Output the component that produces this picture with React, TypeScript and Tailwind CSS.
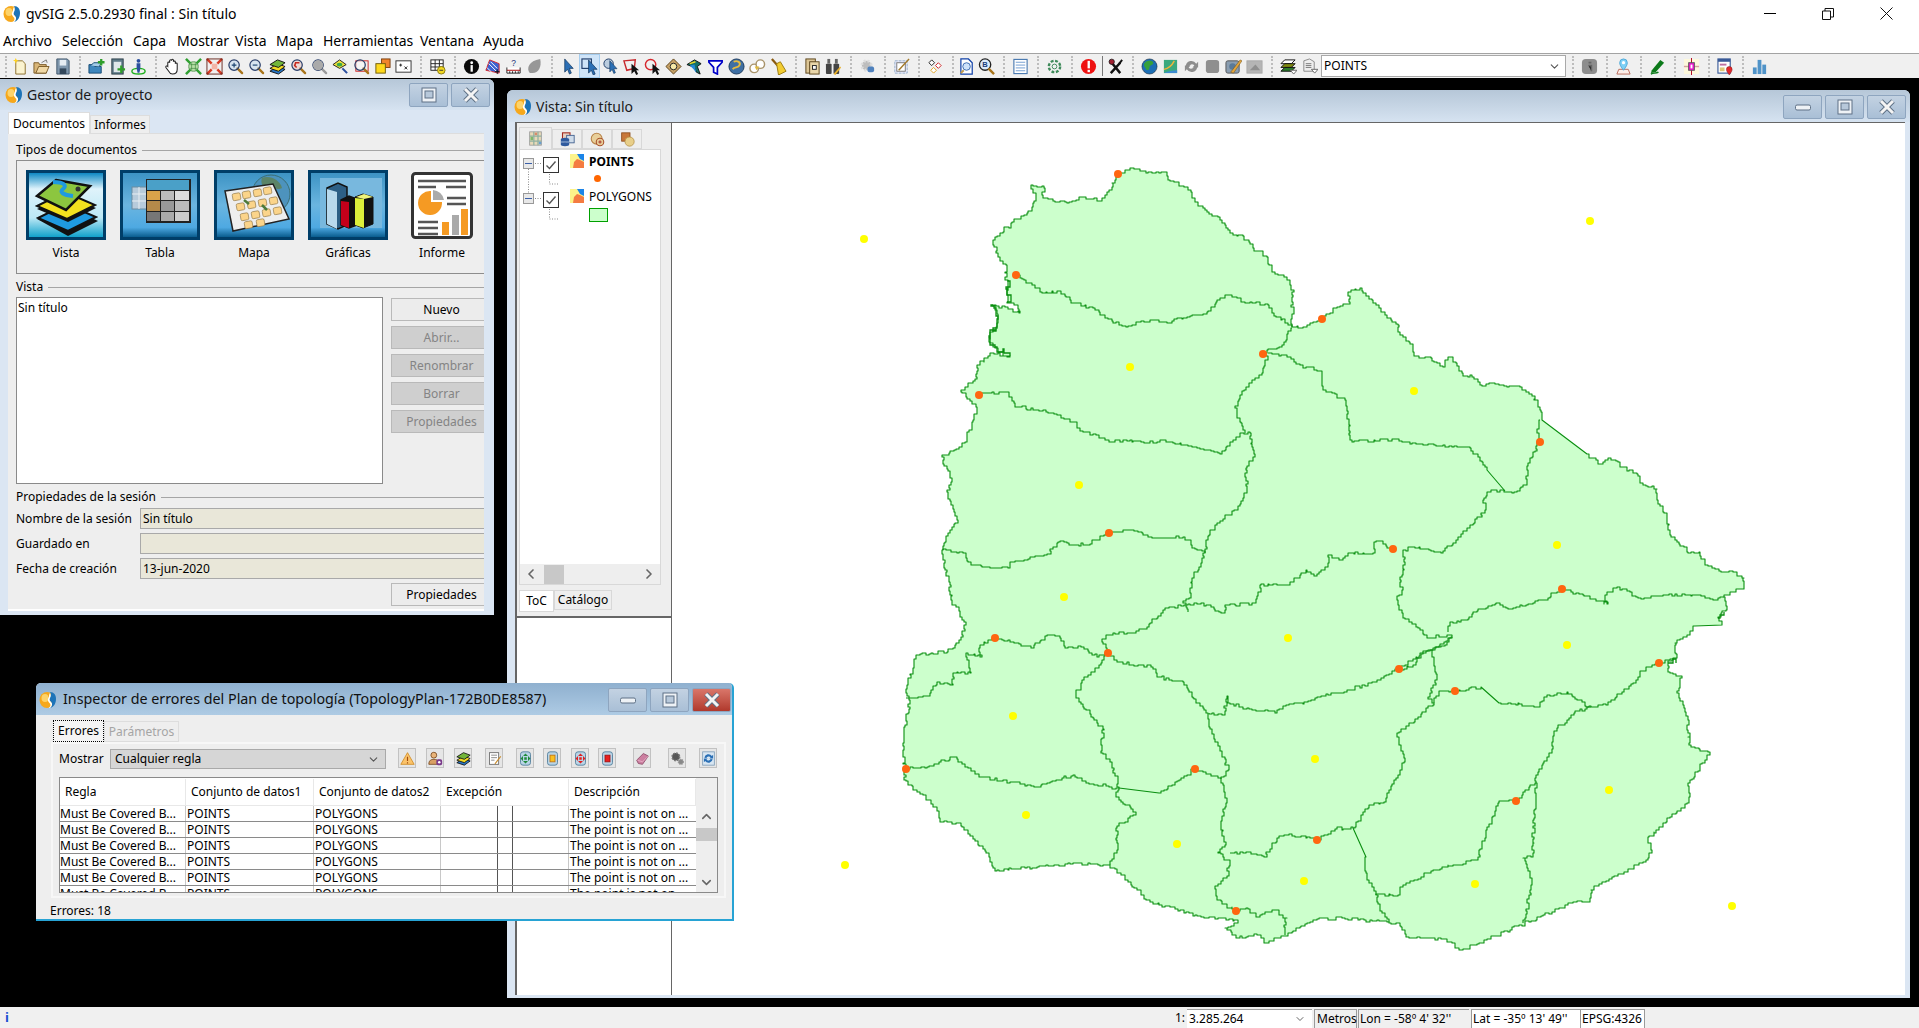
import React from "react";
import { ChevronDown, ChevronLeft, ChevronRight, ChevronUp } from "lucide-react";

type P = number[];
const outer: P[] = [[1118,174],[1130,168],[1148,172],[1165,172],[1168,180],[1187,187],[1195,202],[1207,212],[1220,220],[1230,233],[1247,240],[1253,248],[1267,257],[1272,272],[1287,280],[1294,292],[1292,317],[1292,327],[1303,327],[1322,319],[1337,307],[1350,302],[1348,292],[1360,288],[1373,303],[1385,315],[1398,325],[1400,335],[1413,347],[1414,356],[1427,357],[1443,367],[1448,357],[1453,358],[1463,376],[1470,375],[1480,385],[1493,383],[1507,387],[1520,387],[1532,396],[1540,410],[1542,420,0],[1587,454],[1598,464],[1608,458],[1618,462],[1620,467],[1637,474],[1640,483],[1657,489],[1657,500],[1667,517],[1670,535],[1688,553],[1699,552],[1705,565],[1725,572],[1733,572],[1744,578],[1744,589],[1733,592],[1724,597],[1727,610],[1718,618],[1722,625,0],[1695,626],[1690,635],[1675,643],[1677,658],[1668,663],[1668,672],[1682,678],[1677,693],[1688,720],[1689,745],[1710,755],[1690,783],[1689,803],[1648,840],[1652,853],[1648,860],[1591,890],[1590,902],[1575,902],[1512,930],[1463,950],[1447,939],[1410,938],[1400,923],[1389,922],[1345,918],[1319,919],[1285,936],[1267,943],[1261,935],[1240,938],[1225,928],[1238,920],[1204,917],[1151,902],[1115,868],[1110,865],[1073,864],[997,871],[989,853],[961,823],[940,821],[937,807],[906,780],[903,743],[910,700],[906,689],[916,655],[947,652],[961,637],[966,622],[952,600],[947,570],[942,550],[948,533],[958,520],[947,490],[952,478],[942,455],[962,447],[973,420],[977,407],[961,390],[977,377],[977,365],[990,353],[1010,356],[995,347],[990,342],[990,332],[997,323],[997,310],[993,305],[1020,313],[1018,305],[1007,302],[1008,280],[1005,277],[1007,265],[1000,257],[993,240],[1012,222],[1032,210],[1036,193],[1031,185],[1044,188],[1043,198],[1053,201],[1067,203],[1083,197],[1100,201],[1107,192]];
const rivers: P[][] = [
[[1016,275],[1042,293],[1057,291],[1075,303],[1093,308],[1105,318],[1122,326],[1150,320],[1167,323],[1190,316],[1207,312],[1220,298],[1228,295],[1243,302],[1268,305],[1272,313],[1292,327]],
[[1292,328],[1282,347],[1263,354],[1268,360],[1263,373],[1252,383],[1242,395],[1235,408],[1240,422],[1245,433]],
[[979,395],[1007,392],[1015,407],[1043,410],[1073,422],[1083,432],[1107,440],[1147,443],[1160,440],[1173,443],[1197,448],[1220,454],[1230,442],[1240,433],[1250,433],[1255,457],[1246,470],[1247,490],[1238,510],[1218,523],[1208,540],[1205,553],[1199,570],[1191,583],[1191,598],[1183,603],[1188,612]],
[[1268,353],[1287,357],[1300,365],[1322,373],[1323,390],[1345,400],[1350,433],[1352,442],[1397,439],[1410,444],[1443,445],[1470,448],[1487,470,0],[1505,491]],
[[1540,420],[1537,433],[1540,442],[1527,470],[1527,485],[1517,492],[1493,490],[1484,500],[1485,513],[1470,528],[1453,545],[1443,553],[1415,547],[1403,553],[1405,565],[1400,580],[1402,595],[1397,600],[1403,618],[1420,630],[1427,638],[1447,635],[1452,637],[1447,645],[1433,650],[1423,653],[1413,667],[1399,669]],
[[1393,549],[1383,541],[1376,542],[1375,553],[1350,553],[1343,560],[1329,555],[1328,567],[1317,576],[1307,570],[1290,585],[1261,585],[1256,603],[1225,607],[1225,613],[1204,603],[1188,605],[1165,610],[1149,627],[1136,633],[1115,633],[1102,642],[1108,653]],
[[1109,533],[1090,545],[1060,542],[1047,555],[1013,562],[1010,568],[990,567],[973,565],[963,552],[943,550]],
[[1109,533],[1127,530],[1138,532],[1148,537],[1183,537],[1195,549],[1205,553]],
[[1562,589],[1550,598],[1513,609],[1500,603],[1477,612],[1468,620],[1450,623],[1448,632]],
[[1562,589],[1608,604],[1605,595],[1617,587],[1638,598],[1663,595],[1697,595],[1713,600],[1724,597]],
[[1432,650],[1426,653],[1399,669],[1384,678],[1353,690],[1335,693],[1308,702],[1287,705],[1277,713],[1256,710],[1230,703],[1227,696],[1225,715],[1209,713]],
[[1108,653],[1117,662],[1151,667],[1157,677],[1183,682],[1193,698],[1206,713],[1209,727],[1222,753],[1229,770],[1221,783],[1227,803],[1221,823],[1225,847],[1218,853],[1230,863],[1227,878],[1215,887],[1217,900],[1236,911]],
[[1108,653],[1099,668],[1084,680],[1076,695],[1091,717],[1104,730],[1101,753],[1114,770],[1119,790],[1116,797],[1136,815],[1117,828],[1117,853],[1110,865]],
[[906,769],[927,767],[953,757],[979,777],[1010,782],[1034,787],[1073,775],[1086,783],[1119,788,0],[1159,793],[1195,769],[1221,779]],
[[906,698],[927,696],[937,682],[953,684],[953,673],[971,673],[966,653],[982,657],[980,645],[995,638],[1031,648],[1047,635],[1060,638],[1065,648],[1078,646],[1097,657],[1108,653]],
[[1230,853],[1246,852],[1264,857],[1277,838],[1287,835],[1317,840],[1335,829],[1353,828,0],[1366,857],[1366,873],[1376,895],[1382,913],[1389,922]],
[[1353,828],[1369,805],[1384,802],[1405,758],[1397,733],[1418,717],[1434,703],[1428,697],[1437,677],[1432,650],[1452,637]],
[[1455,691],[1439,692],[1434,703]],
[[1455,691],[1481,687,0],[1499,703],[1539,707],[1544,697],[1567,692],[1586,707],[1606,705],[1633,683],[1646,667],[1659,663],[1674,658]],
[[1591,707],[1575,713],[1554,733],[1552,753],[1544,763],[1536,778],[1534,820],[1533,857],[1523,858],[1532,883],[1525,920],[1523,923]],
[[1536,783],[1516,801],[1499,803],[1489,827],[1478,860],[1455,865],[1429,873],[1403,887],[1400,895],[1376,895]],
[[1236,911],[1246,908],[1256,917],[1272,910],[1287,918],[1285,935]],
];
const jagged: P[][] = [
[[993,305],[997,323],[990,342],[995,347],[1010,356]],
[[1007,302],[1008,280]],
[[1718,618],[1724,612]],
[[1668,663],[1676,658]],
];
const orange = [[1118,174],[1016,275],[1263,354],[979,395],[1109,533],[1322,319],[1540,442],[1393,549],[1562,589],[1659,663],[1399,669],[1455,691],[995,638],[1108,653],[906,769],[1195,769],[1516,801],[1317,840],[1236,911]];
const yellow = [[1130,367],[1079,485],[864,239],[1590,221],[845,865],[1732,906],[1414,391],[1557,545],[1567,645],[1064,597],[1288,638],[1013,716],[1315,759],[1609,790],[1026,815],[1177,844],[1304,881],[1475,884]];

function rough(pts: P[], seed: number, close = false, amp = 3) {
  let s = seed * 9301 + 17;
  const rnd = () => { s = (s * 1664525 + 1013904223) % 4294967296; return s / 4294967296 - 0.5; };
  const list = close ? [...pts, pts[0]] : pts;
  let d = "";
  let py = 0;
  for (let i = 0; i < list.length - 1; i++) {
    const a = list[i], b = list[i + 1];
    const len = Math.hypot(b[0] - a[0], b[1] - a[1]);
    const straight = a[2] === 0;
    const n = straight ? 1 : Math.max(1, Math.floor(len / 3));
    for (let k = i === 0 ? 0 : 1; k <= n; k++) {
      const t = k / n;
      const edge = k === n || k === 0;
      const jx = edge || straight ? 0 : rnd() * amp;
      const jy = edge || straight ? 0 : rnd() * amp;
      const x = Math.round(a[0] + (b[0] - a[0]) * t + jx);
      const y = Math.round(a[1] + (b[1] - a[1]) * t + jy);
      if (!d) d = `M${x} ${y}`;
      else if (straight) d += `L${x} ${y}`;
      else d += `L${x} ${py}L${x} ${y}`;
      py = y;
    }
  }
  return d + (close ? "Z" : "");
}

function Logo({ s = 18 }: { s?: number }) {
  return (
    <svg width={s} height={s} viewBox="0 0 18 18" className="shrink-0">
      <ellipse cx="8" cy="9" rx="7.5" ry="8" fill="#f6a81c" />
      <ellipse cx="6" cy="7" rx="3.5" ry="4" fill="#fdd36a" />
      <path d="M11 1c4 0 6 3 6 7s-2 8-6 9c2-2 3-4 1-6-1-1-3-2-1-5 1-2 1-3 0-5z" fill="#1d74b8" />
      <path d="M11 2c1 2 1 3 0 5-1 2 0 3 1 4 2 2 1 4-1 6l-1 0c2-2 2-4 0-5.500-2-2-1-4 0-6 0-1 0-2 1-3.500z" fill="#fff" />
    </svg>
  );
}

const mag = (c = "#5a8ad0", h = "#a8741a") => (
  <>
    <path d="M11 11l5 5" stroke={h} strokeWidth="2.4" strokeLinecap="round" />
    <circle cx="7.500" cy="7.500" r="5.500" fill={c} fillOpacity=".35" stroke="#2a3f6a" strokeWidth="1.300" />
  </>
);
const arrow = <path d="M5 1l0 14 3-3 2 5 2-1-2-5 4 0z" fill="#2b6fb5" stroke="#0c2f55" strokeWidth=".7" />;
const grayBox = (x = "#8f8f8f") => <rect x="2" y="2" width="14" height="14" rx="3" fill={x} />;

const I: Record<string, React.ReactNode> = {
  newdoc: <><path d="M4 3h7l3 3v11H4z" fill="#fbf3cf" stroke="#8a6d2a" /><path d="M4 0l1 2 2 .5-2 1L4 6 3 3.500 1 2.500l2-.5z" fill="#ffd21f" /></>,
  open: <><path d="M1 5h5l1 2h7v9H1z" fill="#d9b678" stroke="#7a5a26" /><path d="M3 16l3-7h11l-3 7z" fill="#f1d9a6" stroke="#7a5a26" /><path d="M9 5l5-3 1 3" fill="#e7e7e7" stroke="#777" /></>,
  save: <><path d="M3 1h11l2 2v14H3z" fill="#7f97ad" stroke="#40566b" /><rect x="6" y="2" width="7" height="6" fill="#e5ecf2" /><rect x="6" y="11" width="7" height="6" fill="#33475a" /></>,
  addlayer: <><path d="M1 7h5l1 2h7v7H1z" fill="#3f87bd" stroke="#154a73" /><path d="M3 8l3-3h8l-2 4" fill="#a5cde8" stroke="#154a73" /><path d="M14 1v7M10.500 4.500h7" stroke="#2f9e29" strokeWidth="2.400" /></>,
  addtable: <><rect x="3" y="1" width="12" height="16" fill="#5f7b89" stroke="#2c3f49" /><rect x="5" y="4" width="8" height="11" fill="#dfe7ea" /><path d="M13 8v8M9 12h8" stroke="#2f9e29" strokeWidth="2.400" /></>,
  person: <><ellipse cx="9" cy="14" rx="7" ry="3" fill="none" stroke="#20b020" strokeWidth="1.500" /><circle cx="9" cy="3" r="2" fill="#2b4f9e" /><path d="M7 5.500h4v5l-1 5H8l-1-5z" fill="#2b4f9e" /></>,
  hand: <path d="M4 9V5c0-1 2-1 2 0V3c0-1.500 2-1.500 2 0v-.5c0-1.500 2-1.500 2 0V4c0-1 2-1 2 0v2c0-1 2-1 2 0v6c0 3-2 5-5 5-2 0-3-1-4-3L2 10c-.5-1.500 1-2 2-1z" fill="#fff" stroke="#222" strokeWidth="1.100" />,
  fitgreen: <><path d="M1 1l5 5M17 1l-5 5M1 17l5-5M17 17l-5-5" stroke="#31a032" strokeWidth="2.600" /><path d="M4 7h10v4H4z M7 4h4v10H7z" fill="#b8e0a8" stroke="#2a7a2a" strokeWidth=".6" /></>,
  fitred: <><path d="M1 1l5 5M17 1l-5 5M1 17l5-5M17 17l-5-5" stroke="#d93a24" strokeWidth="2.600" /><rect x="1" y="1" width="16" height="16" fill="none" stroke="#6a2a20" /><rect x="6" y="6" width="6" height="6" fill="#f4b4a6" /></>,
  zin: <>{mag("#a9cff0")}<path d="M5 7.500h5M7.500 5v5" stroke="#18406e" strokeWidth="1.200" /></>,
  zout: <>{mag("#a9cff0")}<path d="M5 7.500h5" stroke="#18406e" strokeWidth="1.200" /></>,
  layers: <><path d="M9 9l8 3-7 5-9-3z" fill="#2a78c8" stroke="#111" /><path d="M9 6l8 3-7 5-9-3z" fill="#f3d923" stroke="#111" /><path d="M9 2l8 3-7 5-9-3z" fill="#72b53a" stroke="#111" /></>,
  zback: <>{mag("#e8b3a8")}<path d="M10 5H6L5 8l2 2" fill="none" stroke="#c5281d" strokeWidth="1.700" /></>,
  zgray: <>{mag("#b9b9b9", "#9a9a9a")}<circle cx="7.500" cy="7.500" r="5.500" fill="#aaa" /></>,
  zeye: <><path d="M1 7l7-5 7 5-7 4z" fill="#f4e23a" stroke="#222" /><ellipse cx="8" cy="7" rx="3" ry="2" fill="#3aa84a" /><path d="M11 11l5 5" stroke="#2b4f9e" strokeWidth="2.200" /></>,
  zbox: <><rect x="3" y="3" width="13" height="11" fill="none" stroke="#c22" strokeWidth="1" />{mag("#fff")}</>,
  squares: <><rect x="8" y="1" width="9" height="9" fill="#f0842c" stroke="#7a3f10" /><rect x="2" y="6" width="10" height="10" fill="#ffd91c" stroke="#6f5b0a" /></>,
  xy: <><rect x="1" y="3" width="16" height="12" fill="#fff" stroke="#333" /><path d="M6 6v3M4.500 7.500h3M10 9l3 3m0-3l-3 3" stroke="#222" /></>,
  tablemin: <><rect x="2" y="2" width="13" height="11" fill="#fff" stroke="#222" /><path d="M2 6h13M2 9.500h13M6.500 2v11M11 2v11" stroke="#222" /><circle cx="13" cy="13" r="4" fill="#f3d923" stroke="#8a7a10" /><path d="M11 13h4" stroke="#333" /></>,
  info: <><circle cx="9" cy="9" r="8" fill="#0a0a0a" /><rect x="8" y="7.500" width="2.400" height="7" fill="#fff" /><circle cx="9.200" cy="5" r="1.500" fill="#fff" /></>,
  hatch: <><path d="M2 13L6 2l10 4v10z" fill="#3d62d1" stroke="#d4262a" /><path d="M5 6l8 8M7 4l7 7M3 10l5 5" stroke="#fff" /><path d="M14 12v5M11.500 14.500h5" stroke="#111" /></>,
  ruler: <><path d="M2 10v6h14v-6" fill="#fff" stroke="#222" /><path d="M2 13h14" stroke="#a00" /><path d="M5 16v-2M8 16v-2M11 16v-2M14 16v-2" stroke="#222" /><text x="9" y="8" fontSize="9" textAnchor="middle" fill="#23327a" fontFamily="Liberation Sans">?</text></>,
  leaf: <path d="M4 16C0 11 3 3 15 1c2 8-2 15-8 15-1 0-2 0-3 0z" fill="#979797" />,
  arrow,
  arrowsq: <><rect x="1" y="1" width="10" height="10" fill="none" stroke="#1d3a66" strokeWidth="1.200" /><g transform="translate(3 1)">{arrow}</g></>,
  arrowpoly: <><circle cx="7" cy="6" r="5" fill="#bcd" stroke="#1d3a66" /><g transform="translate(4 2) scale(.85)">{arrow}</g></>,
  redpoly: <><path d="M1 3l12-1-1 9-8 2z" fill="none" stroke="#c7282c" strokeWidth="1.500" /><path d="M9 6v11l3-3 2 4 2-1-2-4h3z" fill="#111" /></>,
  redcirc: <><circle cx="7" cy="7" r="5.500" fill="none" stroke="#d6262c" strokeWidth="1.500" /><path d="M9 6v11l3-3 2 4 2-1-2-4h3z" fill="#111" /></>,
  diamond: <><path d="M9 1l8 8-8 8-8-8z" fill="#c6a166" stroke="#5a3f15" /><circle cx="9" cy="9" r="3.500" fill="#f7e9a8" stroke="#222" /></>,
  colorarrow: <><path d="M1 7l8-5 7 4-4 3 3 8-4-2-2-5z" fill="#136f6a" stroke="#111" /><path d="M4 8l5-1 2 9-3-4z" fill="#2589d6" /><path d="M4 6l6-2" stroke="#f3d923" strokeWidth="1.500" /></>,
  funnel: <path d="M2 3h14v1.500L11 10v7l-4-2v-5L2 4.500z" fill="#fff" stroke="#0000c8" strokeWidth="1.800" />,
  globe: <><circle cx="9" cy="9" r="8" fill="#3e6fa3" stroke="#1d3a5c" /><path d="M6 4c4-2 8 1 6 4-2 3-5 1-7 4" stroke="#e6bb3e" strokeWidth="2" fill="none" /></>,
  sync: <><circle cx="5.500" cy="11" r="4.500" fill="#fff" stroke="#a8936a" strokeWidth="1.500" /><circle cx="12" cy="6.500" r="4.500" fill="#fff" stroke="#a8936a" strokeWidth="1.500" /><path d="M6 9l5 0-3 4" fill="#e0b93a" /></>,
  broom: <><path d="M2 1l6 7" stroke="#8a5a10" strokeWidth="2.400" /><path d="M7 6l4-2 6 10-8 4z" fill="#f2cc31" stroke="#9a7a10" /></>,
  docs: <><rect x="2" y="1" width="10" height="15" fill="#dcc595" stroke="#5a431a" /><rect x="6" y="4" width="10" height="13" fill="#e8d5a8" stroke="#5a431a" /><rect x="9" y="8" width="4" height="4" fill="#fff" stroke="#222" /></>,
  binoc: <><rect x="1" y="6" width="6" height="11" rx="1" fill="#444" /><rect x="9" y="6" width="6" height="11" rx="1" fill="#444" /><rect x="2.500" y="1" width="3" height="5" fill="#666" /><rect x="10.500" y="1" width="3" height="5" fill="#666" /><path d="M9 17l7-8 1 1-6 8z" fill="#e8b02a" /></>,
  gearblue: <><circle cx="8" cy="8" r="5" fill="#bdbdbd" stroke="#ddd" strokeWidth="3" strokeDasharray="2 2" /><rect x="9" y="9" width="7" height="6" rx="2" fill="#4f81bd" /></>,
  boxpen: <><rect x="2" y="3" width="13" height="13" fill="#eef" stroke="#8faac8" strokeDasharray="3 1" /><rect x="4" y="5" width="9" height="9" fill="#fff" stroke="#777" /><path d="M6 13L17 1" stroke="#a37a2c" strokeWidth="1.500" /></>,
  dia3: <><path d="M5 2l3 3-3 3-3-3z" fill="#fff" stroke="#222" /><path d="M12 5l3 3-3 3-3-3z" fill="#fff" stroke="#c22" /><path d="M7 10l3 3-3 3-3-3z" fill="#fff" stroke="#e0a020" /></>,
  docmag: <><path d="M2 1h8l4 4v12H2z" fill="#fff" stroke="#1242a8" strokeWidth="1.300" /><circle cx="8" cy="9" r="4" fill="#cfe3fa" stroke="#3a6ab0" /><path d="M5 13l-3 3" stroke="#c09a4a" strokeWidth="2" /></>,
  bmag: <><circle cx="7.500" cy="7" r="6" fill="#dcebfa" stroke="#222" strokeWidth="1.400" /><text x="7.500" y="10" fontSize="8" fontWeight="700" textAnchor="middle" fill="#1a3f7a" fontFamily="Liberation Sans">B</text><path d="M11 11l6 6" stroke="#a8741a" strokeWidth="2.500" /></>,
  list: <><rect x="2" y="1.500" width="14" height="15" fill="#fff" stroke="#4a79b0" strokeWidth="1.200" /><path d="M4 4.500h10M4 7.500h10M4 10.500h10M4 13.500h10" stroke="#6f9bd0" /></>,
  gearg: <><circle cx="9" cy="9" r="6" fill="none" stroke="#3e8a5a" strokeWidth="2.500" strokeDasharray="3 1.700" /><circle cx="9" cy="9" r="2.500" fill="none" stroke="#3e8a5a" /></>,
  exc: <><circle cx="9" cy="9" r="8" fill="#ee1111" /><rect x="8" y="3" width="2.500" height="8" fill="#fff" /><rect x="8" y="12.500" width="2.500" height="2.500" fill="#fff" /></>,
  tools: <><path d="M4 16L14 5M5 5l9 11" stroke="#111" strokeWidth="2.600" /><path d="M13 6l3-4" stroke="#111" strokeWidth="2" /><circle cx="5" cy="4" r="2.800" fill="#a02030" stroke="#111" strokeWidth=".8" /></>,
  earth: <><circle cx="9" cy="9" r="8" fill="#1d6fb5" stroke="#123" strokeWidth=".6" /><path d="M4 5c3-3 8-3 9 0 0 3-4 2-4 5 0 3-3 4-4 1-1-2-3-3-1-6z" fill="#37a03a" /></>,
  map: <><rect x="2" y="2" width="14" height="14" fill="#3aa97e" /><path d="M2 12c5-1 8-3 11-9" stroke="#f0b53a" strokeWidth="1.500" fill="none" /><path d="M2 16h14v-3c-5 0-9 1-14 3z" fill="#3d8ad0" /></>,
  graysync: <><path d="M3 8a6 6 0 0 1 11-2l2-2v6h-6l2-2a3.500 3.500 0 0 0-6 1z M15 10a6 6 0 0 1-11 2l-2 2V8h6l-2 2a3.500 3.500 0 0 0 6-1z" fill="#8d8d8d" /></>,
  graybox: grayBox(),
  photo: <><rect x="1" y="3" width="14" height="13" rx="2" fill="#8a9db0" stroke="#555" /><circle cx="8" cy="9" r="3.500" fill="#5a7a98" /><path d="M6 15L16 2l2 1L9 16z" fill="#e3a43a" stroke="#6a4a10" strokeWidth=".5" /></>,
  grayrect: <><rect x="1" y="3" width="16" height="13" fill="#b5b5b5" stroke="#aaa" /><path d="M4 13l6-6 5 6z" fill="#8f8f8f" /></>,
  stack2: <><path d="M1 6l4-4h11l-4 4z" fill="#fff" stroke="#111" /><path d="M1 10l4-4h11l-4 4z" fill="#7f8a10" stroke="#111" /><path d="M1 14l4-4h11l-4 4z" fill="#2a7a2a" stroke="#111" /><path d="M11 13h7l-3.500 4z" fill="#fff" stroke="#666" /></>,
  docgray: <><path d="M3 3l6-2 5 3v10H3z" fill="#eee" stroke="#888" /><path d="M5 6h6M5 8h6M5 10h6" stroke="#777" /><path d="M11 12h7l-3.500 4z" fill="#fff" stroke="#666" /></>,
  grayi: <><rect x="1" y="1" width="16" height="16" rx="4" fill="#8d8d8d" /><path d="M8 5h3M8 8h3v6" stroke="#666" strokeWidth="1.800" /></>,
  pin: <><path d="M2 17l2-5h10l2 5z" fill="#fdeee8" stroke="#b86a5a" /><path d="M9 13C6 9 5 7 5 5a4 4 0 0 1 8 0c0 2-1 4-4 8z" fill="#7fd0f5" stroke="#4ea8d8" /><circle cx="9" cy="5" r="1.700" fill="#fff" /></>,
  pen: <><path d="M3 13L12 2l4 3-9 10-5 1z" fill="#0c7a1a" /><path d="M2 17c3-2 5 0 8-2" stroke="#0c7a1a" strokeWidth="1.500" fill="none" /></>,
  pink: <><rect x="1" y="1" width="16" height="16" fill="#fdf8dc" /><path d="M9 0v18" stroke="#b00020" /><path d="M1 9h16" stroke="#d4a0a0" strokeWidth="1.500" /><rect x="6" y="5" width="6" height="8" fill="#f018d0" stroke="#555" /><rect x="8" y="7" width="2" height="4" fill="#fff" /></>,
  formpin: <><rect x="1" y="1" width="13" height="15" fill="#fff" stroke="#3a5a98" strokeWidth="1.200" /><rect x="1" y="1" width="13" height="3" fill="#3a5a98" /><rect x="3" y="6" width="7" height="2" fill="#c070a0" /><rect x="3" y="10" width="5" height="4" fill="#e0c878" /><path d="M13 18c-2-3-3-4-3-6a3 3 0 0 1 6 0c0 2-1 3-3 6z" fill="#e3282c" stroke="#7a1012" strokeWidth=".5" /></>,
  bars: <><rect x="2" y="10" width="4" height="7" fill="#4f93c8" /><rect x="7" y="2" width="4" height="15" fill="#4f93c8" /><rect x="12" y="7" width="4" height="10" fill="#4f93c8" /></>,
  warn: <><path d="M9 2l8 14H1z" fill="#fbc36a" stroke="#d08a20" /><path d="M9 7v5M9 13.500v1.500" stroke="#a04a10" strokeWidth="1.400" /></>,
  userlock: <><circle cx="7" cy="5" r="3.500" fill="#e9b47a" stroke="#7a4a20" /><path d="M1 16c0-5 3-6 6-6s5 1 5 3v3z" fill="#d9a064" stroke="#7a4a20" /><rect x="10" y="10" width="7" height="7" rx="2" fill="#7a3a8a" /><circle cx="13.500" cy="13.500" r="1.500" fill="#fff" /></>,
  notepen: <><rect x="3" y="2" width="11" height="14" fill="#fff" stroke="#666" /><path d="M5 5h7M5 8h7M5 11h4" stroke="#777" /><path d="M9 15l7-9 1 1-7 9z" fill="#c88a2a" /></>,
  frameg: <><rect x="3" y="1" width="12" height="16" rx="3" fill="#b9d4e6" stroke="#4a7a98" /><path d="M9 3l3 3H6zM9 15l3-3H6zM3 9l3-3v6zM15 9l-3-3v6z" fill="#1e8a3a" /><rect x="7.500" y="7.500" width="3" height="3" fill="#1e8a3a" /></>,
  framey: <><rect x="3" y="1" width="12" height="16" rx="3" fill="#b9d4e6" stroke="#4a7a98" /><rect x="6" y="5" width="6" height="8" fill="#f8c020" stroke="#c07010" /></>,
  framer: <><rect x="3" y="1" width="12" height="16" rx="3" fill="#b9d4e6" stroke="#4a7a98" /><path d="M9 3l3 3H6zM9 15l3-3H6zM3 9l3-3v6zM15 9l-3-3v6z" fill="#e02020" /><rect x="7.500" y="7.500" width="3" height="3" fill="#e02020" /></>,
  framerr: <><rect x="3" y="1" width="12" height="16" rx="3" fill="#b9d4e6" stroke="#4a7a98" /><rect x="6" y="5" width="6" height="8" fill="#e82020" stroke="#a01010" /></>,
  eraser: <><path d="M2 11L10 3l6 3-7 10-5-1z" fill="#cc7fa0" stroke="#8a4a68" /><path d="M3 11l6 2 7-7" stroke="#e8b0c8" fill="none" /></>,
  gears: <><circle cx="7" cy="7" r="4.500" fill="#555" stroke="#777" strokeWidth="2" strokeDasharray="2 1.500" /><circle cx="13" cy="13" r="3" fill="#888" stroke="#999" strokeWidth="1.500" strokeDasharray="1.500 1" /></>,
  refresh: <><rect x="2" y="1" width="14" height="16" fill="#d8e6f2" stroke="#7f9db8" /><path d="M4 8a5 5 0 0 1 9-2l1.500-1.500V9H10l1.500-1.500a3 3 0 0 0-5 1zM14 10a5 5 0 0 1-9 2l-1.500 1.500V9H8l-1.500 1.500a3 3 0 0 0 5-1z" fill="#2a6fb5" /></>,
  tocmap: <><rect x="2" y="1" width="14" height="16" fill="#e8d9b8" stroke="#999" /><path d="M2 6h14M2 12h14M7 1v16M12 1v16" stroke="#8fb0a0" strokeWidth="1.500" /><rect x="3" y="7" width="3" height="4" fill="#7fb86a" /><rect x="8" y="2" width="3" height="3" fill="#d88a6a" /><rect x="13" y="13" width="3" height="3" fill="#6aa0d0" /></>,
  tocdb: <><rect x="3" y="1" width="9" height="9" fill="#e8d0c0" stroke="#a02a20" strokeWidth="1.300" /><rect x="8" y="4" width="9" height="9" fill="#cfdcea" stroke="#3a5a8a" /><ellipse cx="6" cy="9" rx="5" ry="2" fill="#2f5a9e" /><rect x="1" y="9" width="10" height="6" fill="#2f5a9e" /><path d="M1 12h10" stroke="#b8cce6" /><ellipse cx="6" cy="15" rx="5" ry="2" fill="#2f5a9e" /></>,
  toccirc: <><circle cx="8" cy="8" r="6.500" fill="#e8cf9a" stroke="#b8844a" strokeWidth="1.300" /><circle cx="12" cy="12" r="4.500" fill="#e8cf9a" stroke="#a8502a" strokeWidth="1.300" /><path d="M12 10v4M10 12h4" stroke="#a02020" /></>,
  tocsq: <><rect x="2" y="1" width="10" height="10" fill="#c8783a" stroke="#8a4a1a" /><circle cx="11.500" cy="11.500" r="5.500" fill="#e8cf8a" stroke="#b8944a" /></>,
};

const Ico = ({ n, s = 18 }: { n: string; s?: number }) => (
  <svg width={s} height={s} viewBox="0 0 18 18" className="shrink-0">{I[n]}</svg>
);

const Grip = ({ w = "w-[13px]" }: { w?: string }) => (
  <div className={`${w} h-[21px] shrink-0 flex justify-center`}>
    <div className="w-[2px] h-full border-l-2 border-dotted border-[#bdbdbd]" />
  </div>
);

const toolbarA = ["newdoc","open","save","|","addlayer","addtable","person","|","hand","fitgreen","fitred","zin","zout","layers","zback","zgray","zeye","zbox","squares","xy","|","tablemin","|","info","hatch","ruler","leaf","|","arrow","*arrowsq","arrowpoly","redpoly","redcirc","diamond","colorarrow","funnel","globe","sync","broom","|","docs","binoc","|","gearblue","|","boxpen","|","dia3","|","docmag","bmag","|","list","|","gearg","|","exc","!","tools","|","earth","map","graysync","graybox","photo","grayrect","|","stack2","docgray"];
const toolbarB = ["|","grayi","|","pin","|","pen","|","pink","|","formpin","|","bars"];

function TBItems({ items }: { items: string[] }) {
  return (
    <>
      {items.map((t, i) => {
        if (t === "|") return <Grip key={i} />;
        if (t === "!") return <div key={i} className="w-[6px] h-[20px] shrink-0 flex justify-center"><div className="w-px h-full bg-[#777]" /></div>;
        const sel = t.startsWith("*");
        return (
          <div key={i} className={`${t === "docmag" ? "w-[17px]" : "w-[21px]"} h-[24px] shrink-0 flex items-center justify-center ${sel ? "bg-[#cfe4f8] border border-[#a6cdee]" : ""}`}>
            <Ico n={sel ? t.slice(1) : t} s={17} />
          </div>
        );
      })}
    </>
  );
}

function WinBtn({ kind, red }: { kind: "min" | "max" | "close"; red?: boolean }) {
  return (
    <div className={`w-[39px] h-[24px] rounded-[2px] border border-[#8ea5bf] flex items-center justify-center ${red ? "bg-gradient-to-b from-[#d9766a] to-[#b0382c]" : "bg-gradient-to-b from-[#c3d2e2] to-[#a9bfd6]"}`}>
      <svg width="18" height="18" viewBox="0 0 18 18">
        {kind === "min" && <rect x="1.500" y="7" width="15" height="5" rx="1.500" fill="#eef2f6" stroke="#5f7186" />}
        {kind === "max" && <><rect x="2" y="2" width="14" height="14" fill="#eef2f6" stroke="#5f7186" /><rect x="5" y="5" width="8" height="7" fill="#b7c8da" stroke="#5f7186" /></>}
        {kind === "close" && <path d="M3 3l12 12M15 3L3 15" stroke="#5f7186" strokeWidth="5" />}
        {kind === "close" && <path d="M3 3l12 12M15 3L3 15" stroke="#f4f4f4" strokeWidth="3" />}
      </svg>
    </div>
  );
}

const GroupLabel = ({ t, cls }: { t: string; cls: string }) => (
  <div className={`${cls} h-[16px] flex items-center gap-[5px]`}>
    <span className="whitespace-nowrap">{t}</span>
    <div className="flex-1 h-px bg-[#a5a5a5]" />
  </div>
);

const Btn = ({ t, off }: { t: string; off?: boolean }) => (
  <div className={`h-[23px] pl-[7px] border border-r-0 border-[#b9b9b9] flex items-center justify-center ${off ? "bg-[#cfcfcf] text-[#848484]" : "bg-[#ececec] text-black"}`}>{t}</div>
);

const Field = ({ l, v }: { l: string; v?: string }) => (
  <div className="h-[21px] flex items-center">
    <span className="w-[124px] shrink-0">{l}</span>
    <div className="flex-1 h-full bg-[#e9e7d9] border border-r-0 border-[#a9a9a9] pl-[2px] flex items-center">{v}</div>
  </div>
);

function DocVista() {
  return (
    <svg width="80" height="70" viewBox="0 0 80 70">
      <defs><linearGradient id="dv" x1="0" y1="0" x2="0" y2="1"><stop offset="0" stopColor="#0e89c4" /><stop offset=".25" stopColor="#dff3fb" /><stop offset=".7" stopColor="#bce8f5" /><stop offset="1" stopColor="#11a2cc" /></linearGradient></defs>
      <rect width="80" height="70" fill="#003e68" />
      <rect x="3" y="3" width="74" height="64" fill="url(#dv)" />
      <path d="M40 36l32 15-30 15L11 49z" fill="#111" />
      <path d="M40 34l30 13-28 14-30-13z" fill="#1f9ae0" stroke="#111" strokeWidth="2" />
      <path d="M39 25l31 13-28 14-31-13z" fill="#111" />
      <path d="M39 22l30 13-28 14-30-13z" fill="#f3e11e" stroke="#111" strokeWidth="2" />
      <path d="M30 10l34 6-24 24-29-14z" fill="#8cc63f" stroke="#111" strokeWidth="2.500" />
      <path d="M27 12c12 0 14 4 10 7-4 3 0 6 10 7" stroke="#1f9ae0" strokeWidth="4" fill="none" />
      <circle cx="52" cy="19" r="2.500" fill="#333" />
    </svg>
  );
}
function DocFrame({ id, children }: { id: string; children: React.ReactNode }) {
  return (
    <svg width="80" height="70" viewBox="0 0 80 70">
      <defs><linearGradient id={id} x1="0" y1="0" x2="0" y2="1"><stop offset="0" stopColor="#3d93c4" /><stop offset=".5" stopColor="#6ab5e0" /><stop offset=".85" stopColor="#4ea9e2" /><stop offset="1" stopColor="#0a5d8e" /></linearGradient></defs>
      <rect width="80" height="70" fill="#003e68" />
      <rect x="3" y="3" width="74" height="64" fill={`url(#${id})`} />
      {children}
    </svg>
  );
}
function DocTabla() {
  return (
    <DocFrame id="dt">
      <rect x="12" y="17" width="16" height="22" fill="#b7cbdb" stroke="#6b8ba0" />
      <path d="M12 24h16M12 31h16M19 17v22" stroke="#e8eef2" />
      <rect x="26" y="9" width="45" height="44" fill="#222" />
      <rect x="27" y="10" width="42" height="10" fill="#4aa0c8" />
      <rect x="27" y="21" width="13" height="9" fill="#d9a24a" /><rect x="41" y="21" width="13" height="9" fill="#bbb" /><rect x="55" y="21" width="14" height="9" fill="#ddd" />
      <rect x="27" y="31" width="13" height="10" fill="#b58a4a" /><rect x="41" y="31" width="13" height="10" fill="#999" /><rect x="55" y="31" width="14" height="10" fill="#bbb" />
      <rect x="27" y="42" width="13" height="9" fill="#777" /><rect x="41" y="42" width="13" height="9" fill="#aaa" /><rect x="55" y="42" width="14" height="9" fill="#ccc" />
    </DocFrame>
  );
}
function DocMapa() {
  const blocks = [[18,24],[28,22],[39,20],[49,18],[22,34],[33,32],[44,30],[55,28],[26,44],[37,42],[48,40],[59,38],[30,52],[42,50]];
  return (
    <DocFrame id="dm">
      <circle cx="57" cy="24" r="19" fill="#4d93bd" stroke="#3b6d72" />
      <path d="M48 8c8-3 18 2 20 10-6 3-8-2-14 0-5 1-8-5-6-10z" fill="#5b8468" />
      <path d="M11 21l48-7 16 35-56 12z" fill="#eeeeee" stroke="#222" strokeWidth="1.500" />
      {blocks.map((b, i) => <rect key={i} x={b[0]} y={b[1]} width="8" height="7" rx="1.500" fill="#fbd48a" stroke="#8a7040" strokeWidth=".6" transform={`rotate(-10 ${b[0]} ${b[1]})`} />)}
      <path d="M30 30l5 4M48 35l5 5" stroke="#4d7a3a" strokeWidth="2.500" />
    </DocFrame>
  );
}
function DocGraficas() {
  return (
    <DocFrame id="dg">
      <rect x="12" y="8" width="62" height="50" fill="#78b8de" />
      <path d="M19 18l11-5 9 4v38l-9 4-11-5z" fill="#2d5f85" stroke="#111" strokeWidth="1.500" />
      <path d="M19 19l10 3v37l-10-5z" fill="#b9d9ec" />
      <path d="M33 30l8-4 8 3v26l-8 3-8-3z" fill="#111" stroke="#111" strokeWidth="1.500" />
      <path d="M33 31l8 1v26l-8-3z" fill="#c4001a" />
      <path d="M47 27l8-3 10 3v27l-10 4-8-3z" fill="#111" stroke="#111" />
      <path d="M47 28l9 1v29l-9-3z" fill="#dcef3a" /><path d="M48 27l8-3 9 3-9 2z" fill="#eef27a" />
    </DocFrame>
  );
}
function DocInforme() {
  return (
    <svg width="62" height="67" viewBox="0 0 62 67">
      <rect x="1.500" y="1.500" width="59" height="64" rx="3" fill="#fff" stroke="#333" strokeWidth="3" />
      <path d="M7 9h48M7 15h18M35 15h20M36 26h19M36 32h19M7 50h20M7 56h20M7 62h20" stroke="#555" strokeWidth="2.500" />
      <path d="M20 30v-11a12 12 0 1 0 11 11z" fill="#f59a23" />
      <path d="M22 18a12 12 0 0 1 11 10H22z" fill="#aaa" />
      <rect x="31" y="50" width="7" height="13" fill="#f59a23" /><rect x="41" y="43" width="7" height="20" fill="#aaa" /><rect x="50" y="37" width="7" height="26" fill="#f59a23" />
    </svg>
  );
}
const LayerIco = () => (
  <svg width="14" height="14" viewBox="0 0 14 14" className="shrink-0">
    <rect width="14" height="14" fill="#fdf38a" /><path d="M7 0h7v7l-4-2z" fill="#1b84e8" /><path d="M3 14l1-6 3-3 3 1 4 2v6z" fill="#f47b41" />
  </svg>
);
const Check = () => (
  <div className="w-[16px] h-[16px] border border-[#333] bg-white flex items-center justify-center shrink-0">
    <svg width="12" height="12" viewBox="0 0 12 12"><path d="M1.500 6.500l3 3 6-7" fill="none" stroke="#555" strokeWidth="1.400" /></svg>
  </div>
);
const Minus = () => (
  <div className="w-[11px] h-[11px] border border-[#999] bg-[#e8e8e8] flex items-center justify-center shrink-0">
    <div className="w-[7px] h-px bg-[#3a5fa8]" />
  </div>
);

function TreeRow({ name, bold, sym, top }: { name: string; bold?: boolean; sym: React.ReactNode; top: number }) {
  return (
    <div className="relative h-[35px] flex items-start pl-[3px]">
      <div className="mt-[4px]"><Minus /></div>
      <div className="ml-[9px] mt-[3px]"><Check /></div>
      <div className="ml-[11px]"><LayerIco /></div>
      <div className="ml-[5px] flex flex-col">
        <span className={`h-[16px] leading-[16px] ${bold ? "font-bold" : ""}`}>{name}</span>
        <div style={{ marginTop: top }}>{sym}</div>
      </div>
    </div>
  );
}

function MapSvg() {
  return (
    <svg className="w-full h-full block" viewBox="672 123 1233 872" preserveAspectRatio="xMinYMin slice">
      <path d={rough(outer, 3, true)} fill="#ccffcc" stroke="#0a8f10" strokeWidth="1.100" strokeLinejoin="round" />
      {rivers.map((r, i) => (
        <path key={i} d={rough(r, i + 11)} fill="none" stroke="#0a8f10" strokeWidth="1.100" strokeLinejoin="round" />
      ))}
      {jagged.map((r, i) => (
        <path key={i} d={rough(r, i + 51, false, 7)} fill="none" stroke="#0a8f10" strokeWidth="1.300" />
      ))}
      {yellow.map((p, i) => <circle key={i} cx={p[0]} cy={p[1]} r="4" fill="#ffff00" />)}
      {orange.map((p, i) => <circle key={i} cx={p[0]} cy={p[1]} r="4" fill="#ff6610" />)}
    </svg>
  );
}

const F = "font-['Noto_Sans','Open_Sans',sans-serif]";
const menus: [string, string][] = [["Archivo", "w-[59px]"], ["Selección", "w-[71px]"], ["Capa", "w-[44px]"], ["Mostrar", "w-[58px]"], ["Vista", "w-[41px]"], ["Mapa", "w-[47px]"], ["Herramientas", "w-[97px]"], ["Ventana", "w-[63px]"], ["Ayuda", "w-[50px]"]];

export default function App() {
  const rowsData = [0, 1, 2, 3, 4, 5];
  return (
    <div className={`w-[1919px] h-[1028px] overflow-hidden flex flex-col bg-black text-black text-[12px] leading-none ${F}`}>
      <div className="h-[27px] bg-white flex items-center pl-[3px] shrink-0">
        <Logo />
        <span className="ml-[5px] text-[14px]">gvSIG 2.5.0.2930 final : Sin título</span>
        <div className="ml-auto flex items-center mr-[4px] h-full">
          <div className="w-[58px] flex justify-center"><div className="w-[12px] h-px bg-black" /></div>
          <div className="w-[58px] flex justify-center">
            <svg width="12" height="12" viewBox="0 0 12 12"><path d="M.5 3h8v8.500h-8zM3 3V.5h8.500V9H9" fill="none" stroke="#111" /></svg>
          </div>
          <div className="w-[58px] flex justify-center">
            <svg width="13" height="13" viewBox="0 0 13 13"><path d="M.5.5l12 12M12.500.5l-12 12" stroke="#111" /></svg>
          </div>
        </div>
      </div>
      <div className="h-[26px] bg-white flex items-center pl-[3px] pt-[2px] text-[14px] shrink-0">
        {menus.map(([m, w]) => <span key={m} className={w}>{m}</span>)}
      </div>
      <div className="h-[25px] bg-[#f0f0f0] border-t border-[#a3a3a3] flex items-center pl-px shrink-0 overflow-hidden">
        <Grip w="w-[9px]" />
        <TBItems items={toolbarA} />
        <div className="ml-[1px] w-[245px] h-[22px] bg-white border border-[#a9a9a9] flex items-center pl-[2px] pr-[4px] justify-between shrink-0">
          <span>POINTS</span><ChevronDown size={13} color="#555" />
        </div>
        <TBItems items={toolbarB} />
      </div>

      <div className="relative flex-1 bg-black">
        {/* Gestor de proyecto */}
        <div className="absolute left-0 top-[1px] w-[494px] h-[536px] bg-[#dbe6f3] rounded-tr-[6px] overflow-hidden">
          <div className="h-[31px] pt-[1px] bg-gradient-to-b from-[#b6c7d8] to-[#d6e3f1] flex items-center pl-[5px] pr-[4px]">
            <Logo />
            <span className="ml-[4px] text-[14px] text-[#1a1a1a]">Gestor de proyecto</span>
            <div className="ml-auto flex gap-[3px]"><WinBtn kind="max" /><WinBtn kind="close" /></div>
          </div>
          <div className="ml-[8px] w-[476px] h-[501px] flex flex-col overflow-hidden">
            <div className="h-[24px] flex items-end shrink-0 bg-[#dbe6f3]">
              <div className="w-[82px] h-[22px] bg-white border border-b-0 border-[#ddd] flex items-center justify-center">Documentos</div>
              <div className="w-[60px] h-[19px] bg-[#eeeeee] border border-[#ddd] flex items-center justify-center">Informes</div>
              <div className="flex-1 h-px bg-[#ddd]" />
            </div>
            <div className="flex-1 bg-[#eeeeee] pl-[8px] flex flex-col border-b-2 border-white">
              <GroupLabel t="Tipos de documentos" cls="mt-[8px]" />
              <div className="mt-[2px] h-[114px] border border-r-0 border-[#8d8d8d] pl-[9px] pt-[9px] flex gap-[14px] shrink-0">
                {[["Vista", <DocVista key="a" />], ["Tabla", <DocTabla key="b" />], ["Mapa", <DocMapa key="c" />], ["Gráficas", <DocGraficas key="d" />], ["Informe", <DocInforme key="e" />]].map(([t, el], i) => (
                  <div key={i} className="w-[80px] flex flex-col items-center">
                    <div className="h-[70px] flex items-center justify-center">{el as React.ReactNode}</div>
                    <div className="h-[26px] flex items-center">{t as string}</div>
                  </div>
                ))}
              </div>
              <GroupLabel t="Vista" cls="mt-[5px]" />
              <div className="mt-[2px] h-[187px] flex shrink-0">
                <div className="w-[367px] h-full bg-white border border-[#8a8a8a] pl-[1px] pt-[4px]">Sin título</div>
                <div className="flex-1 ml-[8px] pt-[1px] flex flex-col gap-[5px]">
                  <Btn t="Nuevo" /><Btn t="Abrir..." off /><Btn t="Renombrar" off /><Btn t="Borrar" off /><Btn t="Propiedades" off />
                </div>
              </div>
              <GroupLabel t="Propiedades de la sesión" cls="mt-[5px]" />
              <div className="mt-[3px] flex flex-col gap-[4px]">
                <Field l="Nombre de la sesión" v="Sin título" />
                <Field l="Guardado en" />
                <Field l="Fecha de creación" v="13-jun-2020" />
              </div>
              <div className="mt-[4px] ml-[375px]"><Btn t="Propiedades" /></div>
            </div>
          </div>
        </div>

        {/* Vista */}
        <div className="absolute left-[507px] top-[12px] w-[1403px] h-[908px] bg-[#dbe6f3] rounded-t-[6px] flex flex-col overflow-hidden">
          <div className="h-[32px] pt-[1px] bg-gradient-to-b from-[#b6c7d8] to-[#d6e3f1] flex items-center pl-[7px] pr-[4px] shrink-0">
            <Logo />
            <span className="ml-[4px] text-[14px] text-[#1a1a1a]">Vista: Sin título</span>
            <div className="ml-auto flex gap-[3px]"><WinBtn kind="min" /><WinBtn kind="max" /><WinBtn kind="close" /></div>
          </div>
          <div className="flex-1 min-h-0 pl-[8px] pr-[5px] pb-[3px] flex">
            <div className="w-[156px] shrink-0 border-l-2 border-[#666] bg-white flex flex-col">
              <div className="h-[496px] bg-[#eeeeee] border-t border-b-2 border-[#666] flex flex-col pl-[2px] pr-[10px] shrink-0">
                <div className="h-[22px] mt-[4px] flex items-end shrink-0">
                  <div className="w-[33px] h-[22px] bg-[#eeeeee] border border-b-0 border-[#d8d8d8] flex items-center justify-center"><Ico n="tocmap" s={15} /></div>
                  {["tocdb", "toccirc", "tocsq"].map((n) => (
                    <div key={n} className="w-[30px] h-[20px] border border-[#d8d8d8] flex items-center justify-center"><Ico n={n} s={15} /></div>
                  ))}
                </div>
                <div className="h-[436px] bg-white border border-[#d8d8d8] flex flex-col shrink-0">
                  <div className="relative flex-1 pt-[4px]">
                    <TreeRow name="POINTS" bold top={5} sym={<div className="ml-[5px] w-[7px] h-[7px] rounded-full bg-[#ff6600]" />} />
                    <TreeRow name="POLYGONS" top={3} sym={<div className="w-[19px] h-[14px] bg-[#ccffcc] border border-[#00a000]" />} />
                    <svg className="absolute left-[3px] top-[4px]" width="50" height="70" viewBox="0 0 50 70">
                      <path d="M5.500 15v24M12 9.500h7M12 44.500h7M26.500 20v10h10M26.500 55v10h10" stroke="#8a8a8a" strokeDasharray="1 1.500" fill="none" />
                    </svg>
                  </div>
                  <div className="h-[20px] bg-[#eeeeee] flex items-center pl-[3px] pr-[3px] shrink-0">
                    <ChevronLeft size={16} color="#666" strokeWidth={2.5} />
                    <div className="ml-[5px] w-[20px] h-[19px] bg-[#c8c8c8]" />
                    <div className="flex-1" />
                    <ChevronRight size={16} color="#666" strokeWidth={2.5} />
                  </div>
                </div>
                <div className="mt-[5px] h-[22px] flex items-start shrink-0">
                  <div className="w-[35px] h-[22px] bg-white border border-t border-[#d8d8d8] flex items-center justify-center">ToC</div>
                  <div className="w-[58px] h-[20px] border border-[#d8d8d8] flex items-center justify-center">Catálogo</div>
                </div>
              </div>
            </div>
            <div className="flex-1 min-w-0 bg-white border-l border-t border-[#666] overflow-hidden">
              <MapSvg />
            </div>
          </div>
        </div>

        {/* Inspector */}
        <div className="absolute left-[36px] top-[605px] w-[698px] h-[238px] bg-[#eeeeee] border-r-2 border-b-2 border-[#27a3d4] rounded-t-[5px] flex flex-col overflow-hidden">
          <div className="h-[32px] pt-[1px] bg-gradient-to-b from-[#8fb0cf] to-[#aecbe4] flex items-center pl-[3px] pr-[1px] shrink-0">
            <Logo />
            <span className="ml-[6px] text-[14.3px] text-[#111]">Inspector de errores del Plan de topología (TopologyPlan-172B0DE8587)</span>
            <div className="ml-auto flex gap-[3px]"><WinBtn kind="min" /><WinBtn kind="max" /><WinBtn kind="close" red /></div>
          </div>
          <div className="pl-[15px] pr-[6px] flex-1 flex flex-col">
            <div className="h-[27px] flex items-end pl-[2px] shrink-0">
              <div className="w-[51px] h-[22px] border border-dotted border-black flex items-center justify-center bg-[#f4f4f4]">Errores</div>
              <div className="w-[75px] h-[21px] border border-[#ddd] text-[#a5a5a5] flex items-center justify-center">Parámetros</div>
            </div>
            <div className="h-[156px] border-2 border-[#f7f7f7] pl-[6px] pr-[6px] flex flex-col shrink-0">
              <div className="mt-[5px] h-[20px] flex items-center shrink-0">
                <span className="w-[51px]">Mostrar</span>
                <div className="w-[276px] h-full bg-[#d6d6d6] border border-[#a9a9a9] pl-[4px] pr-[5px] flex items-center justify-between">
                  <span>Cualquier regla</span><ChevronDown size={13} color="#555" />
                </div>
                <div className="relative flex-1 h-full">
                  <div className="flex h-full items-start -mt-px">
                    {[["warn", 12], ["userlock", 10], ["layers", 10], ["notepen", 13], ["frameg", 13], ["framey", 9], ["framer", 10], ["framerr", 9], ["eraser", 17], ["gears", 17], ["refresh", 13]].map(([n, g]) => (
                      <div key={n as string} style={{ marginLeft: g as number }} className="w-[18px] h-[20px] bg-[#e6e6e6] border border-[#c2c2c2] flex items-center justify-center shrink-0"><Ico n={n as string} s={15} /></div>
                    ))}
                  </div>
                </div>
              </div>
              <div className="mt-[8px] h-[116px] border border-[#8a8a8a] flex shrink-0 overflow-hidden">
                <div className="w-[636px] shrink-0 flex flex-col">
                  <div className="h-[28px] pt-[1px] bg-white grid grid-cols-[126px_128px_127px_128px_127px] shrink-0 border-b border-[#e8e8e8]">
                    {["Regla", "Conjunto de datos1", "Conjunto de datos2", "Excepción", "Descripción"].map((h) => (
                      <div key={h} className="pl-[5px] flex items-center border-r border-[#e8e8e8]">{h}</div>
                    ))}
                  </div>
                  {rowsData.map((r) => (
                    <div key={r} className="h-[16px] bg-white grid grid-cols-[126px_128px_127px_128px_127px] border-b border-[#8a8a8a] shrink-0">
                      <div className="border-r border-[#c8c8c8] whitespace-nowrap flex items-center">Must Be Covered B...</div>
                      <div className="pl-[1px] border-r border-[#c8c8c8] flex items-center">POINTS</div>
                      <div className="pl-[1px] border-r border-[#c8c8c8] flex items-center">POLYGONS</div>
                      <div className="border-r border-[#c8c8c8] flex justify-center"><div className="w-[16px] h-full border-x border-[#555]" /></div>
                      <div className="pl-[1px] whitespace-nowrap flex items-center">The point is not on ...</div>
                    </div>
                  ))}
                </div>
                <div className="flex-1 flex flex-col bg-[#eeeeee] items-center">
                  <div className="h-[28px] shrink-0" />
                  <div className="h-[20px] flex items-center shrink-0"><ChevronUp size={15} color="#666" strokeWidth={2.5} /></div>
                  <div className="mt-[2px] w-full h-[13px] bg-[#c8c8c8] shrink-0" />
                  <div className="flex-1" />
                  <div className="h-[20px] flex items-center shrink-0"><ChevronDown size={15} color="#666" strokeWidth={2.5} /></div>
                </div>
              </div>
            </div>
            <div className="h-[21px] pt-[4px] -ml-px flex items-center">Errores: 18</div>
          </div>
        </div>
      </div>

      <div className="h-[21px] bg-[#f0f0f0] flex items-center shrink-0">
        <span className="ml-[5px] text-[#1a4fd0] font-bold text-[13px]">i</span>
        <div className="flex-1" />
        <span className="mr-[2px]">1:</span>
        <div className="w-[125px] h-[19px] mt-[2px] bg-white border-t border-[#a0a0a0] flex items-center justify-between pl-[2px] pr-[6px]"><span>3.285.264</span><ChevronDown size={12} color="#666" /></div>
        <div className="ml-[2px] w-[43px] h-[19px] mt-[2px] border-t border-l border-r border-[#9a9a9a] flex items-center pl-[2px]">Metros</div>
        <div className="ml-px w-[111px] h-[19px] mt-[2px] border-t border-l border-[#9a9a9a] flex items-center pl-[1px] whitespace-nowrap">Lon = -58º 4' 32''</div>
        <div className="ml-[2px] w-[109px] h-[19px] mt-[2px] bg-white border-t border-l border-[#9a9a9a] flex items-center pl-[1px] whitespace-nowrap">Lat = -35º 13' 49''</div>
        <div className="w-[65px] h-[19px] mt-[2px] bg-white border-t border-l border-r border-[#9a9a9a] flex items-center pl-[1px]">EPSG:4326</div>
        <div className="w-[274px] shrink-0" />
      </div>
    </div>
  );
}
